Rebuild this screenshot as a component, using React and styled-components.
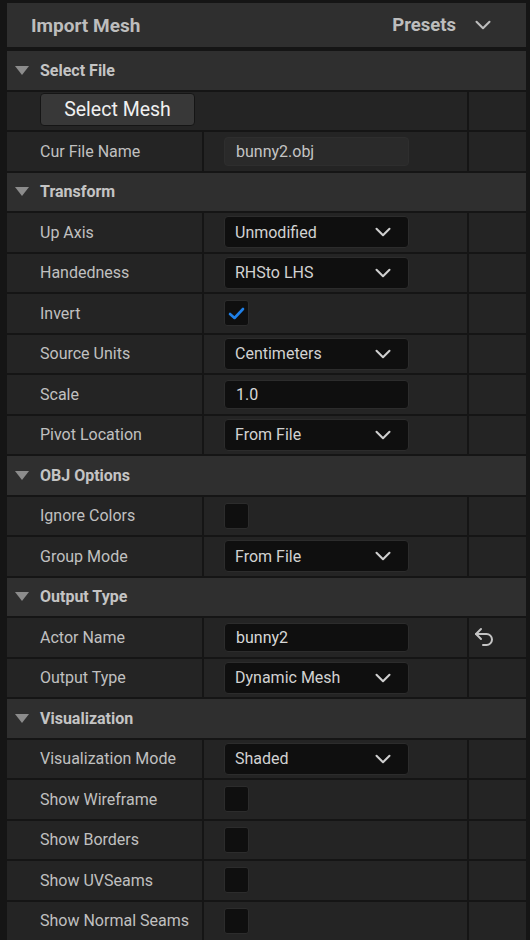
import styled, { createGlobalStyle } from 'styled-components'
import { ChevronDown, Undo2 } from 'lucide-react'

const GlobalStyle = createGlobalStyle`
  html, body {
    margin: 0;
    padding: 0;
    background: #151515;
  }
  body {
    font-family: Roboto, "Noto Sans", "Liberation Sans", sans-serif;
    color: #c0c0c0;
  }
`

const Panel = styled.div`
  width: 519px;
  padding: 3px 0 0 7px;
  display: flex;
  flex-direction: column;
  gap: 4px;
`

const Header = styled.div`
  height: 44px;
  background: #2f2f2f;
  display: flex;
  align-items: center;
  justify-content: space-between;
  padding: 0 30px 0 24px;
`

const Title = styled.div`
  font-size: 19px;
  font-weight: 700;
  color: #bdbdbd;
`

const Presets = styled.div`
  display: flex;
  align-items: center;
  gap: 14px;
  font-size: 18.5px;
  font-weight: 700;
  color: #bdbdbd;
`

const List = styled.div`
  display: flex;
  flex-direction: column;
  gap: 2px;
`

const SectionHeader = styled.div`
  height: 38.5px;
  background: #2f2f2f;
  display: flex;
  align-items: center;
  padding-left: 8px;
  gap: 11px;
  font-size: 16px;
  font-weight: 700;
  color: #c4c4c4;
`

const Triangle = styled.span`
  width: 0;
  height: 0;
  border-left: 7px solid transparent;
  border-right: 7px solid transparent;
  border-top: 9px solid #8c8c8c;
`

const Row = styled.div`
  height: 38.5px;
  display: grid;
  grid-template-columns: ${(p) => (p.$wide ? '460px 57px' : '195px 263px 57px')};
  column-gap: 2px;
`

const Cell = styled.div`
  background: #242424;
  display: flex;
  align-items: ${(p) => (p.$top ? 'flex-start' : 'center')};
  padding-left: ${(p) => p.$pad || 0}px;
  min-width: 0;
`

const Label = styled.span`
  font-size: 16px;
  color: #c0c0c0;
`

const Button = styled.button`
  font-family: inherit;
  font-size: 19.5px;
  color: #f0f0f0;
  background: #383838;
  border: 1px solid #151515;
  border-radius: 4px;
  width: 155px;
  height: 33px;
  margin-top: 1px;
  padding: 0;
  cursor: pointer;
`

const Dropdown = styled.div`
  width: 185px;
  height: 32px;
  box-sizing: border-box;
  background: #0f0f0f;
  border: 1px solid #2c2c2c;
  border-radius: 4px;
  display: flex;
  align-items: center;
  justify-content: space-between;
  padding: 0 12px 0 10px;
  font-size: 16px;
  color: #d2d2d2;
`

const TextBox = styled.div`
  width: 185px;
  height: 29px;
  box-sizing: border-box;
  background: ${(p) => (p.$readOnly ? '#2a2a2a' : '#0f0f0f')};
  border: 1px solid ${(p) => (p.$readOnly ? '#2e2e2e' : '#2c2c2c')};
  border-radius: 4px;
  display: flex;
  align-items: center;
  padding-left: 11px;
  font-size: 16px;
  color: ${(p) => (p.$readOnly ? '#c4c4c4' : '#d8d8d8')};
`

const Check = styled.div`
  width: 25px;
  height: 26px;
  box-sizing: border-box;
  background: #0f0f0f;
  border: 1px solid #2c2c2c;
  border-radius: 3px;
  display: flex;
  align-items: center;
  justify-content: center;
`

function Property({ label, children, reset }) {
  return (
    <Row>
      <Cell $pad={33}>
        <Label>{label}</Label>
      </Cell>
      <Cell $pad={20}>{children}</Cell>
      <Cell $pad={3}>{reset && <Undo2 size={24} color="#c4c4c4" strokeWidth={2} />}</Cell>
    </Row>
  )
}

function Select({ value }) {
  return (
    <Dropdown>
      {value}
      <ChevronDown size={26} color="#cfcfcf" strokeWidth={1.9} />
    </Dropdown>
  )
}

function Checkbox({ checked }) {
  return (
    <Check>
      {checked && (
        <svg width="17" height="13" viewBox="0 0 17 13">
          <polyline points="2,7 6.5,11 15,2" fill="none" stroke="#1f80e8" strokeWidth="2.6" strokeLinecap="round" strokeLinejoin="round" />
        </svg>
      )}
    </Check>
  )
}

function Section({ title }) {
  return (
    <SectionHeader>
      <Triangle />
      {title}
    </SectionHeader>
  )
}

export default function App() {
  return (
    <>
      <GlobalStyle />
      <Panel>
        <Header>
          <Title>Import Mesh</Title>
          <Presets>
            Presets
            <ChevronDown size={26} color="#bdbdbd" strokeWidth={1.9} />
          </Presets>
        </Header>
        <List>
          <Section title="Select File" />
          <Row $wide>
            <Cell $pad={33} $top>
              <Button>Select Mesh</Button>
            </Cell>
            <Cell />
          </Row>
          <Property label="Cur File Name">
            <TextBox $readOnly>bunny2.obj</TextBox>
          </Property>

          <Section title="Transform" />
          <Property label="Up Axis"><Select value="Unmodified" /></Property>
          <Property label="Handedness"><Select value="RHSto LHS" /></Property>
          <Property label="Invert"><Checkbox checked /></Property>
          <Property label="Source Units"><Select value="Centimeters" /></Property>
          <Property label="Scale"><TextBox>1.0</TextBox></Property>
          <Property label="Pivot Location"><Select value="From File" /></Property>

          <Section title="OBJ Options" />
          <Property label="Ignore Colors"><Checkbox /></Property>
          <Property label="Group Mode"><Select value="From File" /></Property>

          <Section title="Output Type" />
          <Property label="Actor Name" reset><TextBox>bunny2</TextBox></Property>
          <Property label="Output Type"><Select value="Dynamic Mesh" /></Property>

          <Section title="Visualization" />
          <Property label="Visualization Mode"><Select value="Shaded" /></Property>
          <Property label="Show Wireframe"><Checkbox /></Property>
          <Property label="Show Borders"><Checkbox /></Property>
          <Property label="Show UVSeams"><Checkbox /></Property>
          <Property label="Show Normal Seams"><Checkbox /></Property>
        </List>
      </Panel>
    </>
  )
}
